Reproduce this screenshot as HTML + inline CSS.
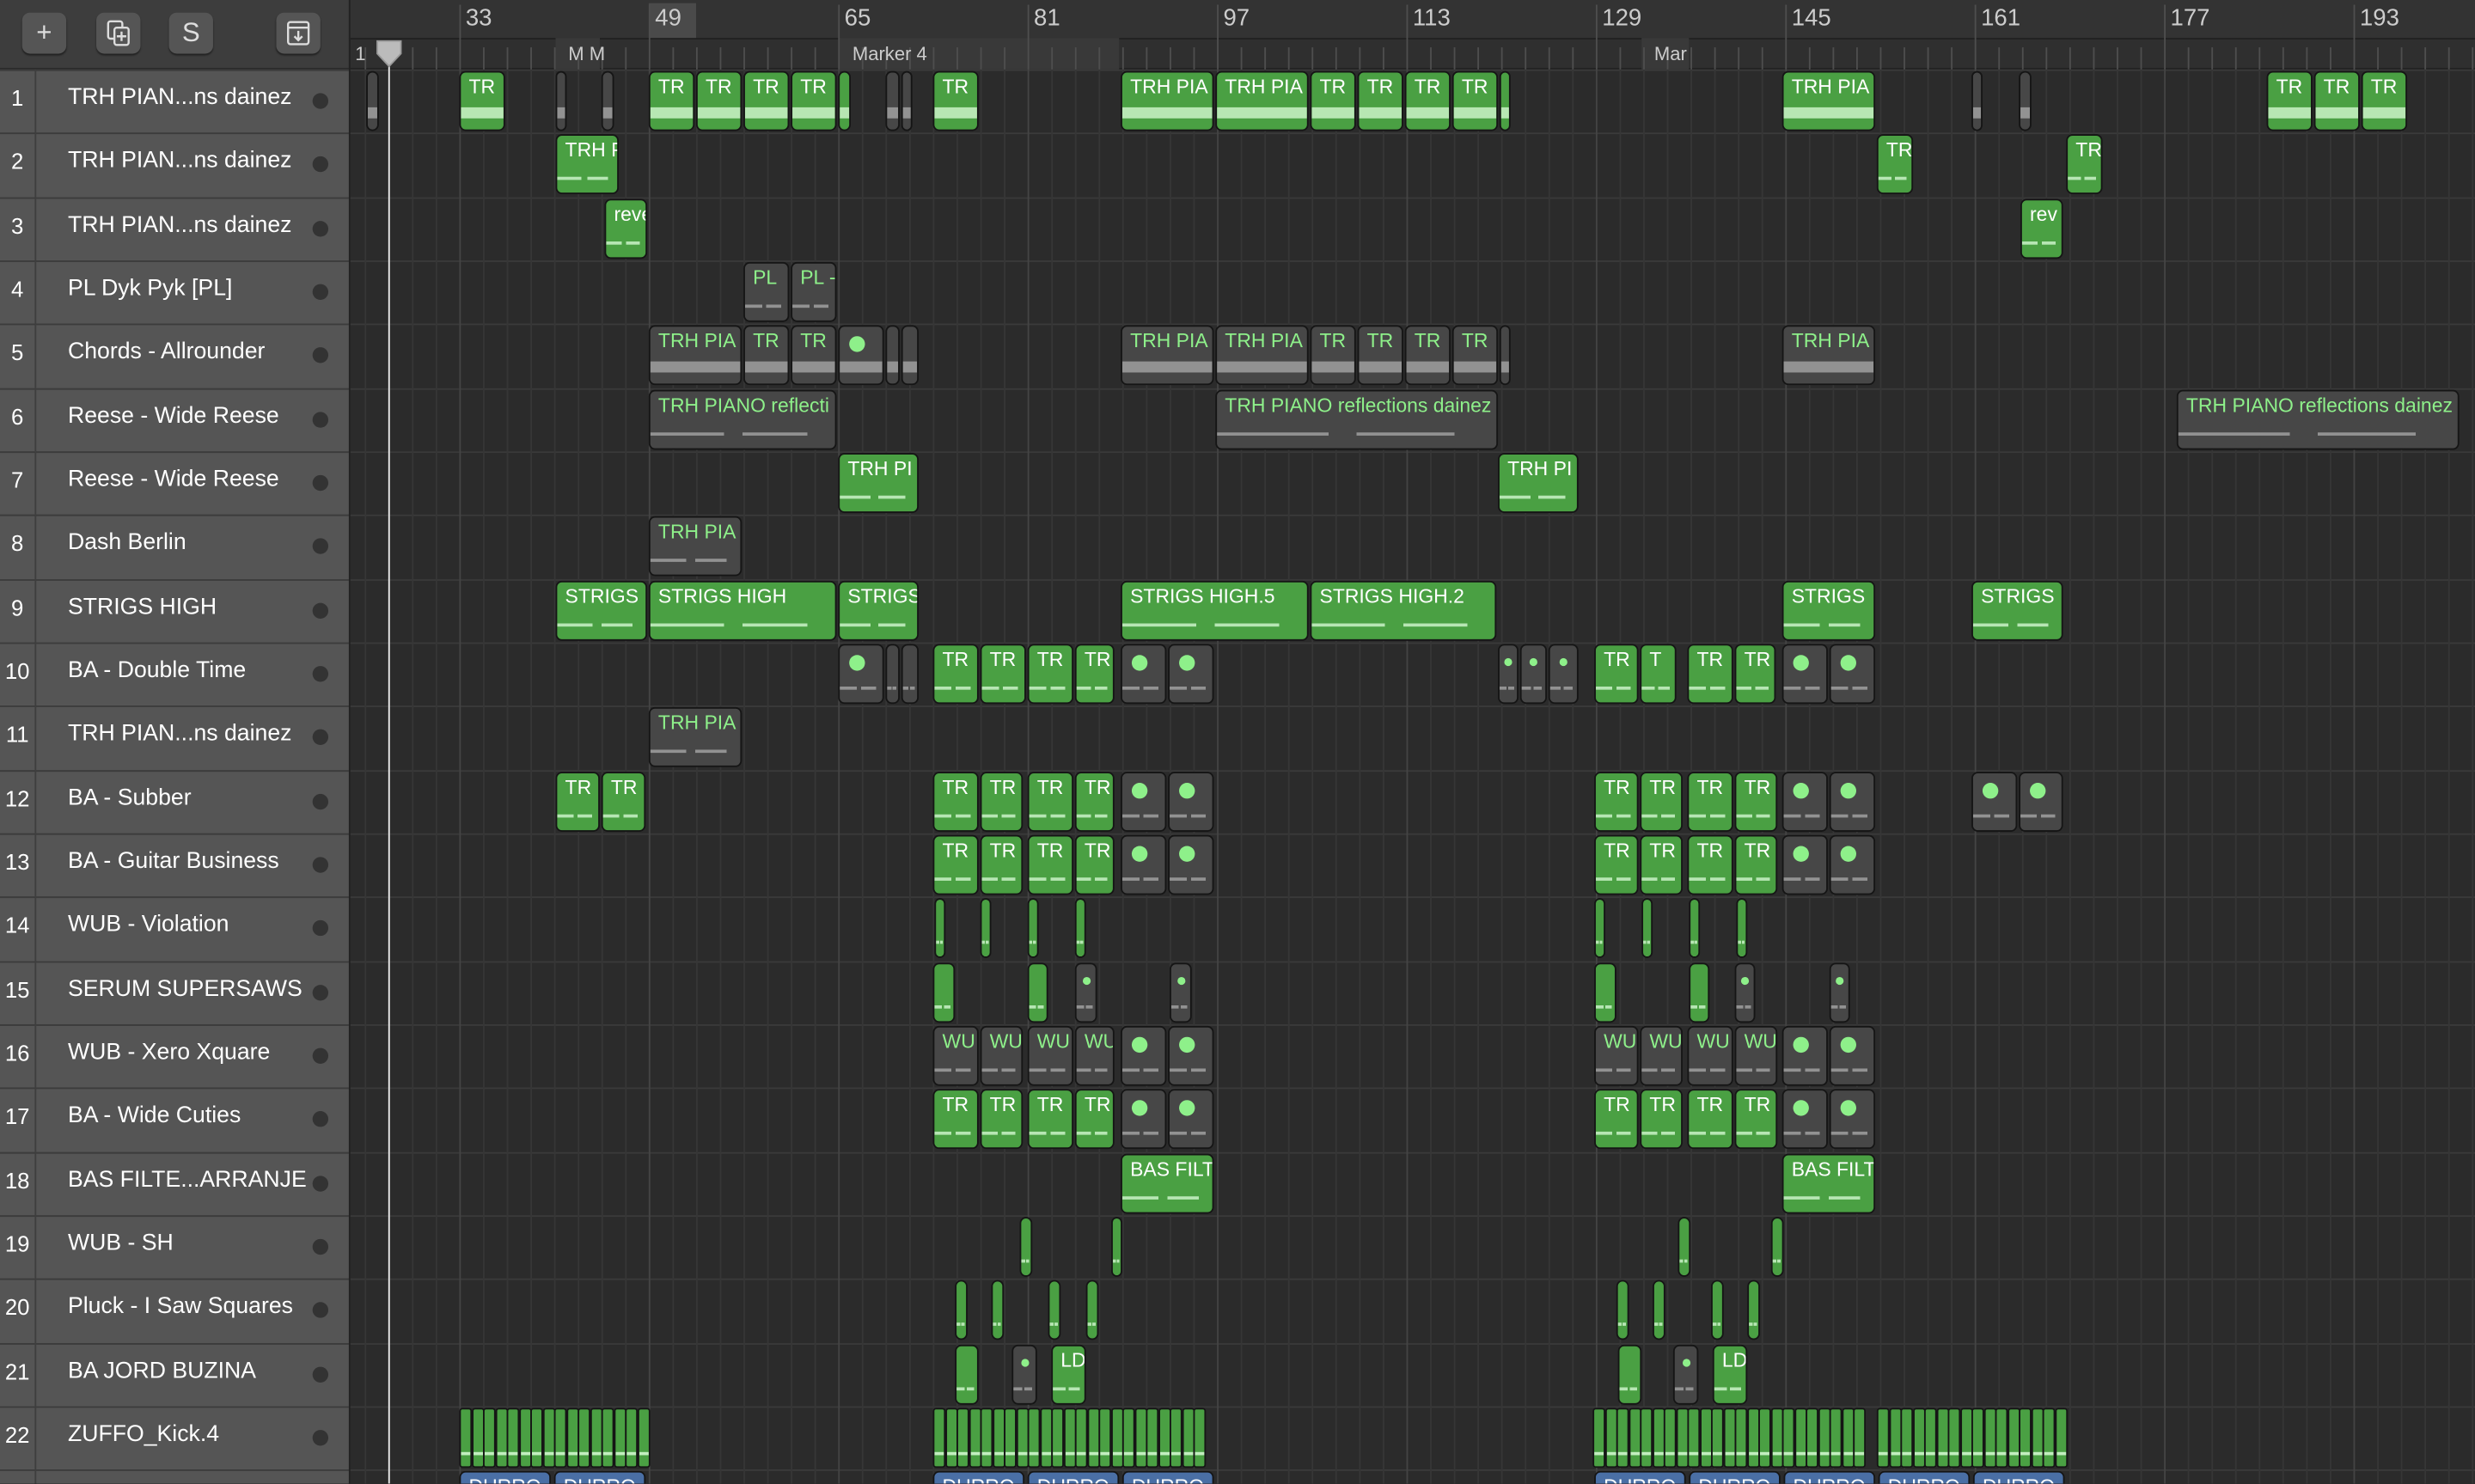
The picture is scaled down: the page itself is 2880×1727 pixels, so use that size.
<!DOCTYPE html>
<html><head><meta charset="utf-8">
<style>
html,body{margin:0;padding:0;background:#2b2b2b;overflow:hidden;width:2880px;height:1726px}
#s{position:absolute;left:0;top:0;width:1568px;height:940px;transform:scale(1.836735);transform-origin:0 0;font-family:"Liberation Sans",sans-serif;background:#2b2b2b;overflow:hidden}
.a{position:absolute;box-sizing:border-box}
.btn{position:absolute;top:8px;width:28px;height:26px;background:#555;border-radius:5px;box-shadow:0 1px 1px #222;color:#ddd;font-size:17px;text-align:center;line-height:26px}
.r{position:absolute;box-sizing:border-box;border:1px solid #151515;border-radius:4px;overflow:hidden;font-size:12.5px;color:#fff;white-space:nowrap;padding:2px 0 0 5px}
.g{background:#4aa043}
.k{background:#474747;color:#8ef08a}
.b{background:#4a6fa5;color:#fff}
.strip{position:absolute;left:0;right:0;height:6px}
.dot{display:inline-block;width:10px;height:10px;border-radius:50%;background:#8ef08a;margin-top:4px}
.sd{display:inline-block;width:5px;height:5px;border-radius:50%;background:#8ef08a;margin-top:4px}
</style></head><body><div id="s">
<div class="a" style="left:0;top:0;width:221px;height:44px;background:#3d3d3d;border-bottom:1px solid #2a2a2a"></div>
<div class="btn" style="left:14px">+</div>
<div class="btn" style="left:61px"><svg width="16" height="18" viewBox="0 0 16 18" style="margin-top:4px"><rect x="1.5" y="1.5" width="9" height="11" rx="1.5" fill="none" stroke="#ddd" stroke-width="1.3"/><rect x="5.5" y="5.5" width="9" height="11" rx="1.5" fill="#555" stroke="#ddd" stroke-width="1.3"/><path d="M10 8v6M7 11h6" stroke="#ddd" stroke-width="1.3"/></svg></div>
<div class="btn" style="left:107px">S</div>
<div class="btn" style="left:175px"><svg width="16" height="18" viewBox="0 0 16 18" style="margin-top:4px"><rect x="1.5" y="2" width="13" height="14" rx="1.5" fill="none" stroke="#ddd" stroke-width="1.3"/><path d="M1.5 5.5h13M8 7.5v6M5.5 11l2.5 2.5 2.5-2.5" fill="none" stroke="#ddd" stroke-width="1.3"/></svg></div>
<div class="a" style="left:221px;top:0;width:1347px;height:24px;background:#333"></div>
<div class="a" style="left:221px;top:24px;width:1347px;height:20px;background:#2f2f2f;border-top:1px solid #222;border-bottom:1px solid #222"></div>
<div class="a" style="left:411px;top:2px;width:30px;height:22px;background:#4a4a4a"></div>
<div class="a" style="left:531px;top:24px;width:178px;height:20px;background:#393939"></div>
<div class="a" style="left:1040px;top:24px;width:30px;height:20px;background:#393939"></div>
<div class="a" style="left:352px;top:24px;width:28px;height:20px;background:#393939"></div>
</div>
<script>
var S=document.getElementById('s');
function el(h){S.insertAdjacentHTML('beforeend',h)}
var names=["TRH PIAN...ns dainez","TRH PIAN...ns dainez","TRH PIAN...ns dainez","PL Dyk Pyk [PL]","Chords - Allrounder","Reese - Wide Reese","Reese - Wide Reese","Dash Berlin","STRIGS HIGH","BA - Double Time","TRH PIAN...ns dainez","BA - Subber","BA - Guitar Business","WUB - Violation","SERUM SUPERSAWS","WUB - Xero Xquare","BA - Wide Cuties","BAS FILTE...ARRANJE","WUB - SH","Pluck - I Saw Squares","BA JORD BUZINA","ZUFFO_Kick.4"];
var RH=40.33;function rt(i){return 44+(i-1)*RH}
var h='';
for(var i=1;i<=23;i++){var t=rt(i);
h+='<div class="a" style="left:0;top:'+t+'px;width:221px;height:'+RH+'px;background:#555;border-top:1px solid #3c3c3c"></div>';
h+='<div class="a" style="left:22px;top:'+t+'px;width:1px;height:'+RH+'px;background:#3e3e3e"></div>';
h+='<div class="a" style="left:221px;top:'+t+'px;width:1347px;height:1px;background:#3a3a3a"></div>';
if(i<=22){h+='<div class="a" style="left:0;top:'+(t+10)+'px;width:22px;text-align:center;color:#fff;font-size:14px">'+i+'</div>';
h+='<div class="a" style="left:43px;top:'+(t+10)+'px;color:#fff;font-size:14.5px;white-space:nowrap">'+names[i-1]+'</div>';
h+='<div class="a" style="left:198px;top:'+(t+15)+'px;width:10px;height:10px;border-radius:50%;background:#333"></div>';}}
for(var x=231;x<1568;x+=15){var major=((x-291)%120===0);
h+='<div class="a" style="left:'+x+'px;top:44px;width:1px;height:896px;background:'+(major?'#444':'#363636')+'"></div>';
h+='<div class="a" style="left:'+x+'px;top:'+(major?3:30)+'px;width:1px;height:'+(major?41:14)+'px;background:#4e4e4e"></div>';}
[33,49,65,81,97,113,129,145,161,177,193].forEach(function(b){var x=291+(b-33)*7.5;h+='<div class="a" style="left:'+(x+4)+'px;top:3px;color:#ccc;font-size:15px">'+b+'</div>'});
h+='<div class="a" style="left:225px;top:27px;color:#ccc;font-size:12px">1</div>';
h+='<div class="a" style="left:540px;top:27px;color:#ccc;font-size:12px">Marker 4</div>';
h+='<div class="a" style="left:1048px;top:27px;color:#ccc;font-size:12px">Mar</div>';
h+='<div class="a" style="left:360px;top:27px;color:#ccc;font-size:12px">M M</div>';
h+='<div class="a" style="left:221px;top:0;width:1px;height:940px;background:#222"></div>';
el(h);
var R=[
[1,232,240,'k',''],[1,291,320,'g','TR'],[1,352,359,'k',''],[1,381,389,'k',''],[1,411,440,'g','TR'],[1,441,470,'g','TR'],[1,471,500,'g','TR'],[1,501,530,'g','TR'],[1,531,539,'g',''],[1,561,570,'k',''],[1,571,578,'k',''],[1,591,620,'g','TR'],[1,710,769,'g','TRH PIA'],[1,770,829,'g','TRH PIA'],[1,830,859,'g','TR'],[1,860,889,'g','TR'],[1,890,919,'g','TR'],[1,920,949,'g','TR'],[1,950,957,'g',''],[1,1129,1188,'g','TRH PIA'],[1,1249,1256,'k',''],[1,1279,1287,'k',''],[1,1436,1465,'g','TR'],[1,1466,1495,'g','TR'],[1,1496,1525,'g','TR'],
[2,352,392,'g','TRH P'],[2,1189,1212,'g','TR'],[2,1309,1332,'g','TR'],
[3,383,410,'g','reve'],[3,1280,1307,'g','rev'],
[4,471,500,'k','PL'],[4,501,530,'k','PL -'],
[5,411,470,'k','TRH PIA'],[5,471,500,'k','TR'],[5,501,530,'k','TR'],[5,531,560,'k','●'],[5,561,570,'k',''],[5,571,582,'k',''],[5,710,769,'k','TRH PIA'],[5,770,829,'k','TRH PIA'],[5,830,859,'k','TR'],[5,860,889,'k','TR'],[5,890,919,'k','TR'],[5,920,949,'k','TR'],[5,950,957,'k',''],[5,1129,1188,'k','TRH PIA'],
[6,411,530,'k','TRH PIANO reflecti'],[6,770,949,'k','TRH PIANO reflections dainez'],[6,1379,1558,'k','TRH PIANO reflections dainez'],
[7,531,582,'g','TRH PI'],[7,949,1000,'g','TRH PI'],
[8,411,470,'k','TRH PIA'],
[9,352,410,'g','STRIGS'],[9,411,530,'g','STRIGS HIGH'],[9,531,582,'g','STRIGS'],[9,710,829,'g','STRIGS HIGH.5'],[9,830,948,'g','STRIGS HIGH.2'],[9,1129,1188,'g','STRIGS'],[9,1249,1307,'g','STRIGS'],
[10,531,560,'k','●'],[10,561,570,'k',''],[10,571,582,'k',''],[10,591,620,'g','TR'],[10,621,650,'g','TR'],[10,651,680,'g','TR'],[10,681,706,'g','TR'],[10,710,739,'k','●'],[10,740,769,'k','●'],[10,949,962,'k','•'],[10,963,980,'k','•'],[10,981,1000,'k','•'],[10,1010,1038,'g','TR'],[10,1039,1062,'g','T'],[10,1069,1098,'g','TR'],[10,1099,1125,'g','TR'],[10,1129,1158,'k','●'],[10,1159,1188,'k','●'],
[11,411,470,'k','TRH PIA'],
[12,352,380,'g','TR'],[12,381,409,'g','TR'],[12,1249,1278,'k','●'],[12,1279,1307,'k','●'],
[14,592,599,'g',''],[14,621,628,'g',''],[14,651,658,'g',''],[14,681,688,'g',''],[14,1010,1017,'g',''],[14,1040,1047,'g',''],[14,1070,1077,'g',''],[14,1100,1107,'g',''],
[15,591,605,'g',''],[15,651,664,'g',''],[15,681,695,'k','•'],[15,741,755,'k','•'],[15,1010,1024,'g',''],[15,1070,1083,'g',''],[15,1099,1112,'k','•'],[15,1159,1172,'k','•'],
[18,710,769,'g','BAS FILT'],[18,1129,1188,'g','BAS FILT'],
[19,646,654,'g',''],[19,704,711,'g',''],[19,1063,1071,'g',''],[19,1122,1130,'g',''],
[20,605,613,'g',''],[20,628,636,'g',''],[20,664,672,'g',''],[20,688,696,'g',''],[20,1024,1032,'g',''],[20,1047,1055,'g',''],[20,1084,1092,'g',''],[20,1107,1115,'g',''],
[21,605,620,'g',''],[21,641,657,'k','•'],[21,666,688,'g','LD'],[21,1025,1040,'g',''],[21,1060,1076,'k','•'],[21,1085,1107,'g','LD']
];
[12,13,16,17].forEach(function(r){[[591,620],[621,648],[651,680],[681,706]].forEach(function(p){R.push([r,p[0],p[1],r==16?'k':'g',r==16?'WU':'TR'])});
[[1010,1038],[1039,1066],[1069,1098],[1099,1126]].forEach(function(p){R.push([r,p[0],p[1],r==16?'k':'g',r==16?'WU':'TR'])});
[[710,739],[740,769],[1129,1158],[1159,1188]].forEach(function(p){R.push([r,p[0],p[1],'k','●'])});});
var o='';
R.forEach(function(a){var t=rt(a[0])+1,w=a[2]-a[1];var lab=a[4],st='';
if(lab=='●'){lab='<span class="dot"></span>';st='padding-left:6px;'}
else if(lab=='•'){lab='<span class="sd"></span>';st='padding-left:'+Math.max(1,(w/2-3.5))+'px;'}
var stc=a[3]=='g'?'#c3eec0':'#9a9a9a';
var big=(a[0]==1||a[0]==5);
o+='<div class="r '+a[3]+'" style="left:'+a[1]+'px;top:'+t+'px;width:'+w+'px;height:38px;'+st+'">'+lab+
'<div class="strip" style="top:'+(big?22:26)+'px;background:'+(big?stc:'linear-gradient(90deg,'+stc+' 0 40%,transparent 40% 50%,'+stc+' 50% 85%,transparent 85%)')+';height:'+(big?7:2)+'px;opacity:.9"></div></div>';});
[[291,411],[591,764],[1009,1181],[1189,1308]].forEach(function(p){for(var x=p[0];x<p[1]-1;x+=7.5){
o+='<div class="r g" style="left:'+x+'px;top:'+(rt(22)+1)+'px;width:8px;height:38px;padding:0;border-radius:2px"><div class="strip" style="top:27px;height:2px;background:#c3eec0"></div></div>'}});
[[291,349],[351,409],[591,649],[651,709],[711,769],[1010,1068],[1070,1128],[1130,1188],[1190,1248],[1250,1308]].forEach(function(p){
o+='<div class="r b" style="left:'+p[0]+'px;top:'+(rt(23)+1)+'px;width:'+(p[1]-p[0])+'px;height:38px">DURRO</div>'});
o+='<div class="a" style="left:246px;top:26px;width:1px;height:914px;background:#eee"></div>';
o+='<svg class="a" style="left:237px;top:25px" width="19" height="18"><path d="M2 1h15v8l-7.5 8L2 9z" fill="#bbb" stroke="#999"/></svg>';
el(o);
</script>
</body></html>
